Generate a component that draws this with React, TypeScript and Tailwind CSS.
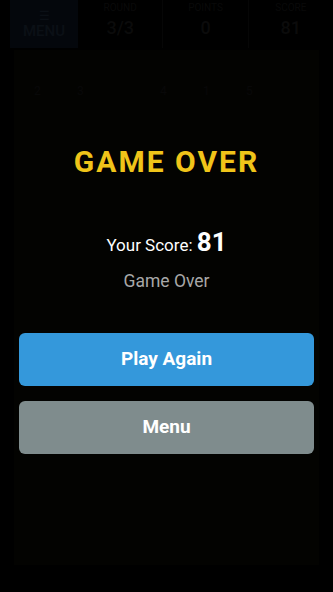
import React from "react";

const stats = [
    { label: "ROUND", value: "3/3" },
    { label: "POINTS", value: "0" },
    { label: "SCORE", value: "81" },
];

export default function App() {
    return (
        <div className="relative w-full h-[592px] bg-black overflow-hidden font-['Roboto',sans-serif]">
            {/* Dimmed game screen behind the overlay */}
            <div className="flex flex-col h-full">
                <div className="flex h-[48px] items-stretch pl-[10px]">
                    <div className="w-[68px] bg-[#080d14] flex flex-col items-center justify-center gap-[2px]">
                        <span className="text-[#131b25] text-[12px] leading-none">☰</span>
                        <span className="text-[#131b25] text-[15px] font-medium leading-none">MENU</span>
                    </div>
                    {stats.map((s, i) => (
                        <div
                            key={s.label}
                            className={`flex-1 flex flex-col items-center pt-[3px] ${i < 2 ? "border-r border-[#0a0a0a]" : ""}`}
                        >
                            <span className="text-[#101010] text-[10px] leading-none">{s.label}</span>
                            <span className="text-[#131313] text-[18px] font-medium leading-tight mt-[4px]">{s.value}</span>
                        </div>
                    ))}
                </div>
                <div className="mx-[14px] mt-[2px] h-[515px] bg-[#060503] flex px-[20px] pt-[32px] text-[#0e0e0e] text-[12px]">
                    <div className="flex w-full justify-between">
                        <span>2</span>
                        <span>3</span>
                        <span className="ml-[40px]">4</span>
                        <span>1</span>
                        <span>5</span>
                        <span className="w-[10px]"></span>
                    </div>
                </div>
            </div>

            {/* Game over overlay */}
            <div className="absolute inset-0 bg-black/40 flex flex-col items-center px-[19px]">
                <h1 className="mt-[144px] text-[#f0c419] text-[30px] font-bold tracking-[2px] leading-[36px]">
                    GAME OVER
                </h1>
                <p className="mt-[48px] text-white text-[17px] leading-[28px]">
                    Your Score: <span className="text-[26px] font-bold">81</span>
                </p>
                <p className="mt-[11px] text-[#a8a8a8] text-[17.5px] leading-[22px]">Game Over</p>
                <button className="mt-[41px] w-full h-[53px] rounded-[6px] bg-[#3498db] text-white text-[19px] font-bold">
                    Play Again
                </button>
                <button className="mt-[15px] w-full h-[53px] rounded-[6px] bg-[#7f8c8d] text-white text-[19px] font-bold">
                    Menu
                </button>
            </div>
        </div>
    );
}
